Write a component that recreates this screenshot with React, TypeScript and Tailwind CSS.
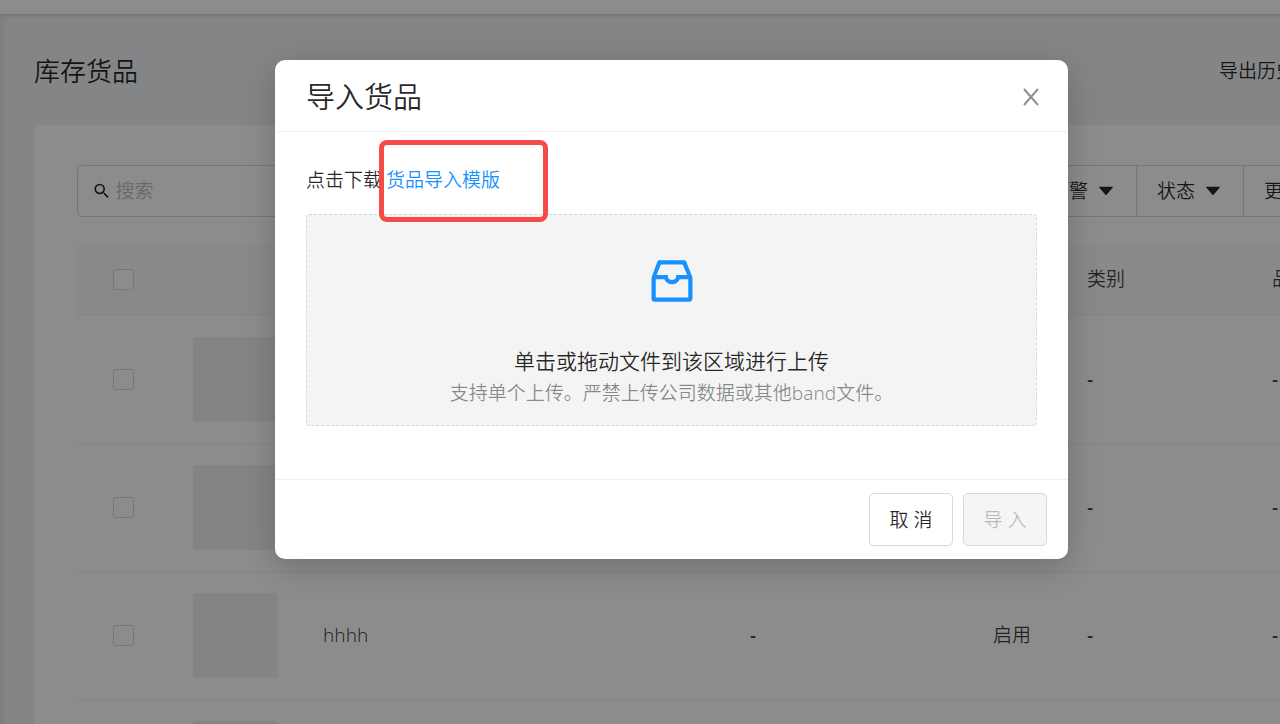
import { AiFillCaretDown, AiOutlineInbox } from "react-icons/ai";
import { MdSearch } from "react-icons/md";

const filters = ["预警", "状态", "更多"];

const columns = [
  { key: "select", title: "", width: "w-[95px]" },
  { key: "image", title: "", width: "w-[130px]" },
  { key: "name", title: "", width: "w-[427px]" },
  { key: "sku", title: "", width: "w-[243px]" },
  { key: "status", title: "", width: "w-[94px]" },
  { key: "category", title: "类别", width: "w-[185px]" },
  { key: "brand", title: "品牌", width: "w-[143px]" },
];

const rows = [
  { id: 1, name: "", sku: "", status: "", category: "-", brand: "-" },
  { id: 2, name: "", sku: "", status: "", category: "-", brand: "-" },
  { id: 3, name: "hhhh", sku: "-", status: "启用", category: "-", brand: "-" },
  { id: 4, name: "", sku: "", status: "", category: "", brand: "" },
];

const Checkbox = ({ label }: { label: string }) => (
  <input
    type="checkbox"
    aria-label={label}
    className="ml-9 block size-[21px] appearance-none rounded-[3px] border border-[#d9d9d9] bg-white"
  />
);

const CloseIcon = () => (
  <svg viewBox="0 0 16 18" className="h-[18px] w-4" fill="none" stroke="currentColor" strokeWidth="1.9">
    <path d="M1 1l14 16M15 1L1 17" />
  </svg>
);

const FilterBar = () => (
  <div className="flex h-[52px]">
    <label className="flex flex-1 items-center gap-1 rounded-l-[5px] border border-[#d9d9d9] pl-[14px]">
      <MdSearch className="size-5 text-black/85" />
      <input
        type="text"
        aria-label="搜索"
        placeholder="搜索"
        className="w-full bg-transparent outline-none placeholder:text-[#bfbfbf]"
      />
    </label>
    {filters.map((filter) => (
      <button
        key={filter}
        type="button"
        className="flex w-[107px] items-center justify-between border-y border-r border-[#d9d9d9] pr-5 pl-5 text-black/85"
      >
        {filter}
        <AiFillCaretDown className="size-5 text-black/85" />
      </button>
    ))}
  </div>
);

const GoodsTable = () => (
  <table className="mt-[27px] w-full table-fixed border-collapse text-left text-black/75">
    <thead>
      <tr className="h-[71px] border-b border-[#f0f0f0] bg-[#fafafa]">
        {columns.map((column) => (
          <th key={column.key} className={`${column.width} p-0 font-[350]`}>
            {column.key === "select" ? (
              <Checkbox label="全选" />
            ) : (
              <div
                className={`flex h-[30px] items-center pl-[21px] ${
                  column.key === "category" ? "border-r border-[#f0f0f0]" : ""
                }`}
              >
                {column.title}
              </div>
            )}
          </th>
        ))}
      </tr>
    </thead>
    <tbody>
      {rows.map((row) => (
        <tr key={row.id} className="h-32 border-b border-[#f0f0f0]">
          <td className="p-0">
            <Checkbox label={`选择 ${row.id}`} />
          </td>
          <td className="p-0 pl-[21px]">
            <div className="size-[85px] rounded-[3px] bg-[#f0f0f0]" />
          </td>
          <td className="p-0 pl-[21px]">{row.name}</td>
          <td className="p-0 pl-[21px] font-medium">{row.sku}</td>
          <td className="p-0 pl-[21px]">{row.status}</td>
          <td className="p-0 pl-[21px] font-medium">{row.category}</td>
          <td className="p-0 pl-[21px] font-medium">{row.brand}</td>
        </tr>
      ))}
    </tbody>
  </table>
);

const ImportDialog = () => (
  <div
    role="dialog"
    aria-labelledby="import-title"
    className="flex w-[793px] max-w-full flex-col rounded-[10px] bg-white text-black/85 shadow-[0_8px_32px_rgba(0,0,0,0.2)]"
  >
    <div className="flex h-[72px] items-center justify-between border-b border-[#f0f0f0] pt-[2px] pr-[29px] pl-[31px]">
      <h2 id="import-title" className="text-[29px]">
        导入货品
      </h2>
      <button type="button" aria-label="关闭" className="text-black/45">
        <CloseIcon />
      </button>
    </div>

    <div className="px-[31px] pt-8 pb-[53px]">
      <p className="flex leading-8">
        点击下载
        <span className="relative ml-1">
          <a href="#" className="text-[#1890ff]">
            货品导入模版
          </a>
          {/* highlight around the template link */}
          <span className="pointer-events-none absolute -top-6 -left-[7px] h-[82px] w-[169px] rounded-lg border-[5px] border-[#f54a45]" />
        </span>
      </p>

      <button
        type="button"
        className="mt-[18px] flex h-[212px] w-full flex-col items-center rounded-[3px] border border-dashed border-[#d9d9d9] bg-[#f4f4f4] pt-[38px]"
      >
        <AiOutlineInbox className="size-14 text-[#1890ff]" />
        <span className="mt-9 text-[21px] leading-8">单击或拖动文件到该区域进行上传</span>
        <span className="leading-8 text-black/45">支持单个上传。严禁上传公司数据或其他band文件。</span>
      </button>
    </div>

    <div className="flex justify-end gap-[10px] border-t border-[#f0f0f0] px-[21px] py-[13px]">
      <button
        type="button"
        className="h-[53px] w-[84px] rounded-[5px] border border-[#d9d9d9] bg-white pt-[2px] shadow-[0_2px_0_rgba(0,0,0,0.02)]"
      >
        取 消
      </button>
      <button
        type="button"
        disabled
        className="h-[53px] w-[84px] rounded-[5px] border border-[#d9d9d9] bg-[#f5f5f5] pt-[2px] text-black/25"
      >
        导 入
      </button>
    </div>
  </div>
);

export default function App() {
  return (
    <div className="relative h-screen overflow-hidden bg-[#f0f2f5] font-['Noto_Sans','Noto_Sans_CJK_SC',sans-serif] text-[19px] font-[350]">
      <div className="min-w-[1428px]">
        <div className="h-[14px] bg-white shadow-[0_1px_5px_rgba(0,21,41,0.15)]" />
        <main className="px-[34px] shadow-[inset_4px_0_4px_rgba(0,21,41,0.05)]">
          <div className="flex h-[111px] items-center justify-between pt-1 pr-[99px] text-black/85">
            <h1 className="text-[26px]">库存货品</h1>
            <a href="#">导出历史</a>
          </div>
          <section className="rounded-[5px] bg-white px-[43px] pt-10">
            <FilterBar />
            <GoodsTable />
          </section>
        </main>
      </div>

      <div className="absolute inset-0 flex items-start justify-center bg-black/45 pt-[60px] pl-[63px]">
        <ImportDialog />
      </div>
    </div>
  );
}
